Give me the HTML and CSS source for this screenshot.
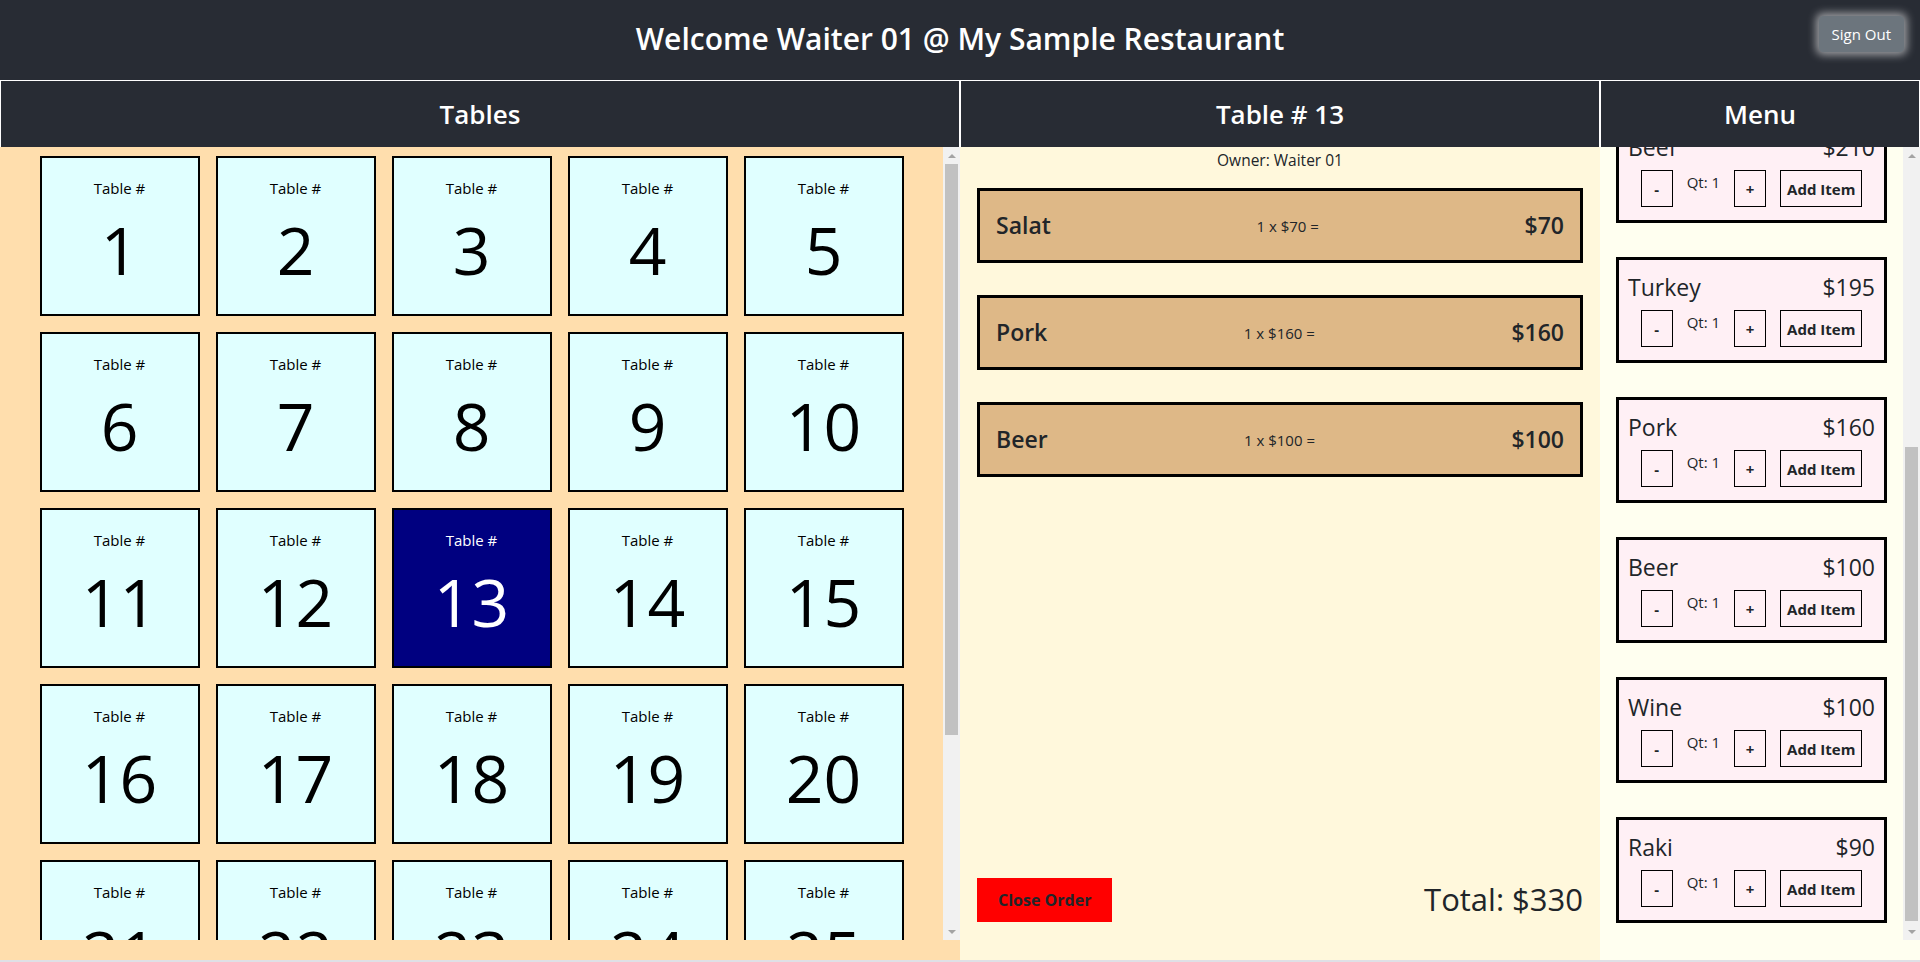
FILE: index.html
```html
<!DOCTYPE html>
<html lang="en">
<head>
<meta charset="utf-8">
<title>Waiter</title>
<link rel="stylesheet" href="styles.css">
</head>
<body>
<div class="app">
  <header class="topbar">
    <h2 class="title">Welcome Waiter 01 @ My Sample Restaurant</h2>
    <button class="signout">Sign Out</button>
  </header>
  <div class="colheads">
    <h3 class="colhead">Tables</h3>
    <h3 class="colhead">Table # 13</h3>
    <h3 class="colhead">Menu</h3>
  </div>
  <main class="content">
    <section class="tables-pane">
      <div class="tables-scroll">
        <div class="tile"><span class="tile-label">Table #</span><span class="tile-num">1</span></div>
        <div class="tile"><span class="tile-label">Table #</span><span class="tile-num">2</span></div>
        <div class="tile"><span class="tile-label">Table #</span><span class="tile-num">3</span></div>
        <div class="tile"><span class="tile-label">Table #</span><span class="tile-num">4</span></div>
        <div class="tile"><span class="tile-label">Table #</span><span class="tile-num">5</span></div>
        <div class="tile"><span class="tile-label">Table #</span><span class="tile-num">6</span></div>
        <div class="tile"><span class="tile-label">Table #</span><span class="tile-num">7</span></div>
        <div class="tile"><span class="tile-label">Table #</span><span class="tile-num">8</span></div>
        <div class="tile"><span class="tile-label">Table #</span><span class="tile-num">9</span></div>
        <div class="tile"><span class="tile-label">Table #</span><span class="tile-num">10</span></div>
        <div class="tile"><span class="tile-label">Table #</span><span class="tile-num">11</span></div>
        <div class="tile"><span class="tile-label">Table #</span><span class="tile-num">12</span></div>
        <div class="tile active"><span class="tile-label">Table #</span><span class="tile-num">13</span></div>
        <div class="tile"><span class="tile-label">Table #</span><span class="tile-num">14</span></div>
        <div class="tile"><span class="tile-label">Table #</span><span class="tile-num">15</span></div>
        <div class="tile"><span class="tile-label">Table #</span><span class="tile-num">16</span></div>
        <div class="tile"><span class="tile-label">Table #</span><span class="tile-num">17</span></div>
        <div class="tile"><span class="tile-label">Table #</span><span class="tile-num">18</span></div>
        <div class="tile"><span class="tile-label">Table #</span><span class="tile-num">19</span></div>
        <div class="tile"><span class="tile-label">Table #</span><span class="tile-num">20</span></div>
        <div class="tile"><span class="tile-label">Table #</span><span class="tile-num">21</span></div>
        <div class="tile"><span class="tile-label">Table #</span><span class="tile-num">22</span></div>
        <div class="tile"><span class="tile-label">Table #</span><span class="tile-num">23</span></div>
        <div class="tile"><span class="tile-label">Table #</span><span class="tile-num">24</span></div>
        <div class="tile"><span class="tile-label">Table #</span><span class="tile-num">25</span></div>
        <div class="tile"><span class="tile-label">Table #</span><span class="tile-num">26</span></div>
        <div class="tile"><span class="tile-label">Table #</span><span class="tile-num">27</span></div>
        <div class="tile"><span class="tile-label">Table #</span><span class="tile-num">28</span></div>
        <div class="tile"><span class="tile-label">Table #</span><span class="tile-num">29</span></div>
        <div class="tile"><span class="tile-label">Table #</span><span class="tile-num">30</span></div>
      </div>
      <div class="vscroll" aria-hidden="true">
        <div class="vs-btn up"></div>
        <div class="vs-track"><div class="vs-thumb thumb-tables"></div></div>
        <div class="vs-btn down"></div>
      </div>
    </section>
    <section class="order-pane">
      <div class="owner">Owner: Waiter 01</div>
      <div class="orders">
        <div class="order"><span class="order-name">Salat</span><span class="order-qty">1 x $70 =</span><span class="order-sum">$70</span></div>
        <div class="order"><span class="order-name">Pork</span><span class="order-qty">1 x $160 =</span><span class="order-sum">$160</span></div>
        <div class="order"><span class="order-name">Beer</span><span class="order-qty">1 x $100 =</span><span class="order-sum">$100</span></div>
      </div>
      <div class="order-footer">
        <button class="close-btn">Close Order</button>
        <h2 class="total">Total: $330</h2>
      </div>
    </section>
    <section class="menu-pane">
      <div class="menu-scroll">
        <div class="menu-list">
          <div class="menu-item"><div class="mi-head"><span>Salat</span><span>$70</span></div><div class="mi-controls"><button class="mi-btn step">-</button><span class="qty">Qt: 1</span><button class="mi-btn step">+</button><button class="mi-btn">Add Item</button></div></div>
          <div class="menu-item"><div class="mi-head"><span>Soup</span><span>$45</span></div><div class="mi-controls"><button class="mi-btn step">-</button><span class="qty">Qt: 1</span><button class="mi-btn step">+</button><button class="mi-btn">Add Item</button></div></div>
          <div class="menu-item"><div class="mi-head"><span>Chicken</span><span>$180</span></div><div class="mi-controls"><button class="mi-btn step">-</button><span class="qty">Qt: 1</span><button class="mi-btn step">+</button><button class="mi-btn">Add Item</button></div></div>
          <div class="menu-item"><div class="mi-head"><span>Beef</span><span>$210</span></div><div class="mi-controls"><button class="mi-btn step">-</button><span class="qty">Qt: 1</span><button class="mi-btn step">+</button><button class="mi-btn">Add Item</button></div></div>
          <div class="menu-item"><div class="mi-head"><span>Turkey</span><span>$195</span></div><div class="mi-controls"><button class="mi-btn step">-</button><span class="qty">Qt: 1</span><button class="mi-btn step">+</button><button class="mi-btn">Add Item</button></div></div>
          <div class="menu-item"><div class="mi-head"><span>Pork</span><span>$160</span></div><div class="mi-controls"><button class="mi-btn step">-</button><span class="qty">Qt: 1</span><button class="mi-btn step">+</button><button class="mi-btn">Add Item</button></div></div>
          <div class="menu-item"><div class="mi-head"><span>Beer</span><span>$100</span></div><div class="mi-controls"><button class="mi-btn step">-</button><span class="qty">Qt: 1</span><button class="mi-btn step">+</button><button class="mi-btn">Add Item</button></div></div>
          <div class="menu-item"><div class="mi-head"><span>Wine</span><span>$100</span></div><div class="mi-controls"><button class="mi-btn step">-</button><span class="qty">Qt: 1</span><button class="mi-btn step">+</button><button class="mi-btn">Add Item</button></div></div>
          <div class="menu-item"><div class="mi-head"><span>Raki</span><span>$90</span></div><div class="mi-controls"><button class="mi-btn step">-</button><span class="qty">Qt: 1</span><button class="mi-btn step">+</button><button class="mi-btn">Add Item</button></div></div>
        </div>
      </div>
      <div class="vscroll" aria-hidden="true">
        <div class="vs-btn up"></div>
        <div class="vs-track at-end"><div class="vs-thumb thumb-menu"></div></div>
        <div class="vs-btn down"></div>
      </div>
    </section>
  </main>
</div>
</body>
</html>
```
FILE: styles.css
```css
* { box-sizing: border-box; }
html, body { margin: 0; padding: 0; }
body {
  font-family: "Open Sans", "Noto Sans", sans-serif;
  color: #212529;
  background: #dfe0e6;
  height: 962px;
  overflow: hidden;
}
.app { height: 960px; display: flex; flex-direction: column; }

.topbar {
  height: 80px;
  flex: none;
  background: #282c34;
  color: #fff;
  display: grid;
  grid-template-columns: 1fr auto 1fr;
  align-items: center;
}
.title { grid-column: 2; margin: 0 0 2px; font-size: 30px; font-weight: 600; line-height: 1.2; }
.signout {
  grid-column: 3;
  justify-self: end;
  align-self: start;
  margin: 16px 16px 0 0;
  background: #6c757d;
  color: #fff;
  border: 1px solid #6c757d;
  border-radius: 4px;
  font-family: inherit;
  font-size: 15px;
  line-height: 24px;
  padding: 5px 12px;
  box-shadow: 0 0 9px 3px rgba(255, 255, 255, 0.55);
}

.colheads { display: grid; grid-template-columns: 960px 640px 320px; height: 67px; flex: none; }
.colhead {
  margin: 0;
  background: #282c34;
  color: #fff;
  border: 1px solid #fff;
  border-bottom: 0;
  display: flex;
  align-items: center;
  justify-content: center;
  font-size: 26px;
  font-weight: 600;
}

.content { display: grid; grid-template-columns: 960px 640px 320px; flex: 1; min-height: 0; }

/* fake classic scrollbar */
.vscroll { flex: none; width: 17px; height: 793px; background: #f1f1f1; display: flex; flex-direction: column; }
.vs-btn { flex: none; height: 17px; display: flex; align-items: center; justify-content: center; }
.vs-btn::before { content: ""; width: 0; height: 0; border-left: 4px solid transparent; border-right: 4px solid transparent; }
.vs-btn.up::before { border-bottom: 4px solid #a3a3a3; }
.vs-btn.down::before { border-top: 4px solid #a3a3a3; }
.vs-track { flex: 1; padding: 0 2px; display: flex; flex-direction: column; }
.vs-track.at-end { justify-content: flex-end; padding-bottom: 2px; }
.vs-thumb { background: #c1c1c1; flex: none; }
.thumb-tables { height: 571px; }
.thumb-menu { height: 474px; }

.tables-pane { background: #ffdead; min-height: 0; display: flex; align-items: flex-start; }
.tables-scroll {
  flex: 1;
  height: 793px;
  overflow: hidden;
  display: flex;
  flex-wrap: wrap;
  justify-content: center;
  align-content: flex-start;
  padding-top: 1px;
}
.tile {
  width: 160px;
  height: 160px;
  margin: 8px;
  border: 2px solid #000;
  background: #e0ffff;
  color: #000;
  display: flex;
  flex-direction: column;
  align-items: center;
  padding-top: 18px;
}
.tile-label { font-size: 15px; line-height: 24px; }
.tile-num { font-size: 66px; line-height: 80px; margin-top: 9px; }
.tile.active { background: #000080; color: #fff; }

.order-pane {
  background: #fff8dc;
  display: flex;
  flex-direction: column;
  padding: 2px 17px 38px;
  min-height: 0;
}
.owner { text-align: center; font-size: 15.5px; line-height: 22px; margin-bottom: 17px; }
.orders { display: flex; flex-direction: column; gap: 32px; }
.order {
  border: 3px solid #000;
  background: #deb887;
  display: flex;
  justify-content: space-between;
  align-items: center;
  padding: 20px 16px;
}
.order-name, .order-sum { font-size: 23px; font-weight: 600; line-height: 29px; }
.order-qty { font-size: 15px; }
.order-footer { margin-top: auto; display: flex; justify-content: space-between; align-items: center; }
.close-btn {
  background: #f00;
  border: 1px solid #f00;
  color: #212529;
  font-family: inherit;
  font-weight: 700;
  font-size: 16px;
  line-height: 24px;
  padding: 9px 20px;
}
.total { margin: 0; font-size: 31px; font-weight: 500; line-height: 1.2; }

.menu-pane { background: #fffff0; min-height: 0; display: flex; align-items: flex-start; }
.menu-scroll { flex: 1; height: 793px; overflow: hidden; display: flex; flex-direction: column-reverse; }
.menu-list { flex: none; display: flex; flex-direction: column; gap: 34px; padding: 17px 16px; }
.menu-item { border: 3px solid #000; background: #fff0f5; padding: 13px 9px; }
.mi-head { display: flex; justify-content: space-between; font-size: 23px; font-weight: 500; line-height: 29px; margin-bottom: 8px; }
.mi-controls { display: flex; justify-content: center; align-items: flex-start; gap: 14px; }
.mi-btn {
  height: 37px;
  border: 1px solid #000;
  background: transparent;
  color: #212529;
  font-family: inherit;
  font-size: 15px;
  font-weight: 700;
  line-height: 24px;
  padding: 5px 6px;
}
.mi-btn.step { width: 32px; padding: 5px 0; }
.qty { font-size: 15px; line-height: 24px; }
```
